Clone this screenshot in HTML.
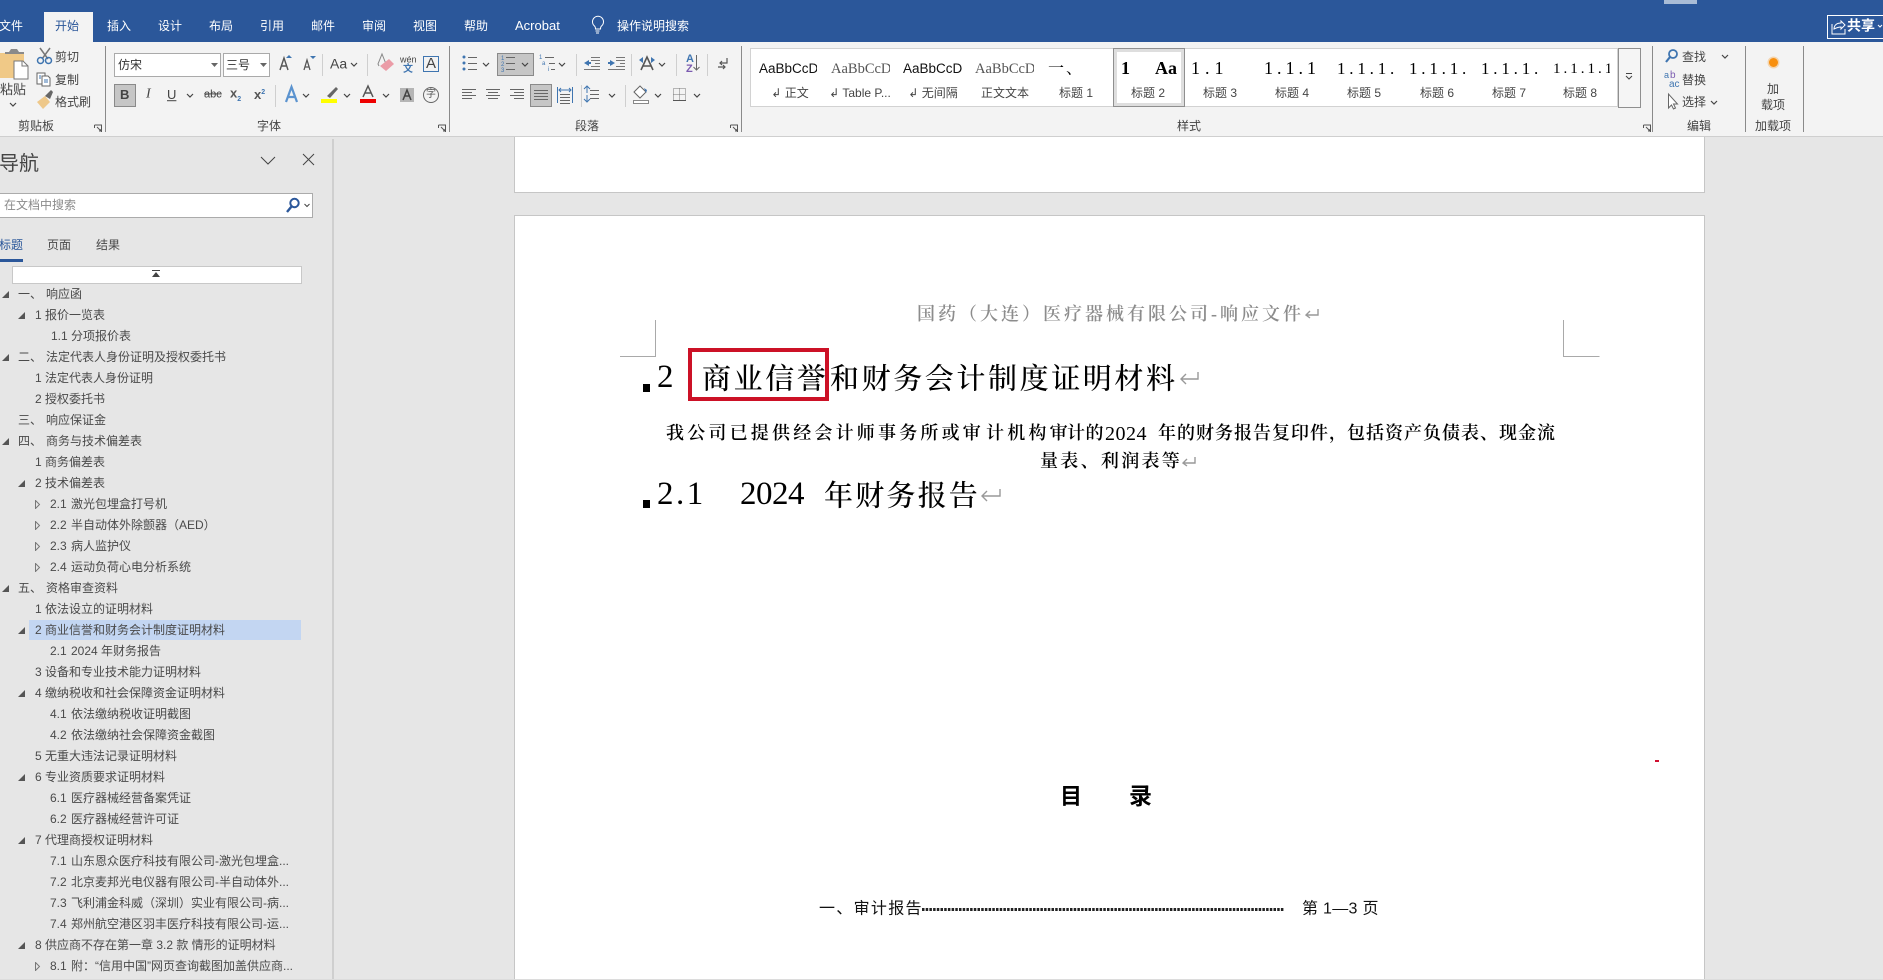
<!DOCTYPE html>
<html lang="zh"><head><meta charset="utf-8"><title>Word</title>
<style>
html,body{margin:0;padding:0;width:1883px;height:980px;overflow:hidden;background:#e6e6e6}
body{position:relative;font-family:"Liberation Sans","Noto Sans CJK SC",sans-serif;font-size:12px;color:#444}
.a{position:absolute}
.t{position:absolute;white-space:nowrap;transform:translateY(-50%);line-height:1.2}
.w{color:#fff}
.r{color:#444}
.c{transform:translate(-50%,-50%);text-align:center}
.s{font-family:"Liberation Serif","Noto Serif CJK SC",serif;color:#000;position:absolute;white-space:nowrap;transform:translateY(-50%);line-height:1.2}
.row{position:absolute;left:0;width:333px;height:21px;line-height:21px;color:#4a4a4a}
.row span{position:absolute;top:0;white-space:nowrap}
.row i{position:absolute;top:7px;width:0;height:0;border-style:solid}
.ex{border-width:0 0 7px 7px;border-color:transparent transparent #555 transparent}
.co{width:4px!important;height:8px!important;top:6px!important;border:0;background:none}
.co svg{position:absolute;left:0;top:0}
.sm{position:absolute;overflow:hidden;white-space:nowrap;height:18px;line-height:18px;top:60px;font-size:13.500px}
</style></head><body>

<!-- title / tab bar -->
<div class="a" style="left:0;top:0;width:1883px;height:42px;background:#2b579a"></div>
<div class="a" style="left:1664px;top:0;width:33px;height:4px;background:#a9bcd6"></div>
<div class="a" style="left:44px;top:12px;width:49px;height:30px;background:#f3f3f3"></div>
<span class="t w" style="left:-1px;top:25.500px">文件</span>
<span class="t" style="left:55px;top:25.500px;color:#2b579a">开始</span>
<span class="t w" style="left:107px;top:25.500px">插入</span>
<span class="t w" style="left:158px;top:25.500px">设计</span>
<span class="t w" style="left:209px;top:25.500px">布局</span>
<span class="t w" style="left:260px;top:25.500px">引用</span>
<span class="t w" style="left:311px;top:25.500px">邮件</span>
<span class="t w" style="left:362px;top:25.500px">审阅</span>
<span class="t w" style="left:413px;top:25.500px">视图</span>
<span class="t w" style="left:464px;top:25.500px">帮助</span>
<span class="t w" style="left:515px;top:25.500px;font-size:13px">Acrobat</span>
<span class="t w" style="left:617px;top:25.500px">操作说明搜索</span>
<div class="a" style="left:1827px;top:15px;width:60px;height:22px;border:1px solid #fff"></div>
<span class="t w" style="left:1847px;top:26px;font-size:14px;font-weight:700">共享</span>

<!-- ribbon -->
<div class="a" style="left:0;top:42px;width:1883px;height:94px;background:#f3f3f3;border-bottom:1px solid #cfcfcf"></div>

<!-- combos, toggles -->
<div class="a" style="left:114px;top:53px;width:107px;height:24px;background:#fff;border:1px solid #aaa;box-sizing:border-box"></div>
<div class="a" style="left:223px;top:53px;width:47px;height:24px;background:#fff;border:1px solid #aaa;box-sizing:border-box"></div>
<div class="a" style="left:114px;top:84px;width:22px;height:23px;background:#c6c6c6;border:1px solid #8a8a8a;box-sizing:border-box"></div>
<div class="a" style="left:497px;top:53px;width:37px;height:23px;background:#c6c6c6;border:1px solid #8a8a8a;box-sizing:border-box"></div>
<div class="a" style="left:530px;top:84px;width:22px;height:23px;background:#c6c6c6;border:1px solid #8a8a8a;box-sizing:border-box"></div>

<!-- styles gallery -->
<div class="a" style="left:750px;top:48px;width:868px;height:59px;background:#fff;border:1px solid #d2d2d2;box-sizing:border-box"></div>
<div class="a" style="left:1113px;top:48px;width:72px;height:59px;background:#fff;border:1px solid #8f8f8f;box-sizing:border-box;box-shadow:inset 0 0 0 3px #dedede"></div>
<div class="a" style="left:1618px;top:48px;width:23px;height:60px;background:#f5f5f5;border:1px solid #8f8f8f;box-sizing:border-box"></div>

<svg class="a" style="left:0;top:0" width="1883" height="137" viewBox="0 0 1883 137" fill="none">
 <!-- lamp -->
 <path d="M594.500 28a5.500 5.500 0 1 1 7 0c-.8.7-1 1.400-1 3h-5c0-1.600-.2-2.300-1-3zM595.500 33h4M596 35h3" stroke="#fff" transform="translate(0,-2)"/>
 <!-- share icon -->
 <path d="M1832 24v10h13v-5M1834 29c0-4 3-6 7-6v-2l4 4-4 4v-2c-3 0-5 1-7 2z" stroke="#fff"/>
 <path d="M1878 25l2 2 2-2" stroke="#fff"/>
 <!-- main seps -->
 <g stroke="#8a8a8a"><path d="M105.500 46v86M449.500 46v86M741.500 46v86M1652.500 46v86M1745.500 46v86M1803.500 46v86"/></g>
 <!-- light seps -->
 <g stroke="#cfcfcf"><path d="M322.500 54v22M367.500 54v22M275.500 85v22M576.500 54v22M631.500 54v22M676.500 54v22M707.500 54v22M581.500 85v22M625.500 85v22"/></g>
 <!-- paste -->
 <path d="M0 53h24v25H0z" fill="#f0c987"/>
 <path d="M5 54h19v-2h-5l-2-3h-6l-2 3H5z" fill="#8a8a8a"/>
 <path d="M14 61h9l5 5v13H14z" fill="#fff" stroke="#777"/>
 <path d="M22 61v5h6" stroke="#777"/>
 <path d="M10 103l3 3 3-3" stroke="#444" stroke-width="1.200"/>
 <!-- scissors -->
 <path d="M40 48l8 11M50 48l-8 11" stroke="#777" stroke-width="1.500"/>
 <circle cx="40.500" cy="60.500" r="3" stroke="#3f75b0" stroke-width="1.500"/>
 <circle cx="48.500" cy="60.500" r="3" stroke="#3f75b0" stroke-width="1.500"/>
 <!-- copy -->
 <path d="M37 73h8v11h-8z" fill="#fff" stroke="#666"/>
 <path d="M42 76h6l2 2v8h-8z" fill="#fff" stroke="#666"/>
 <path d="M44 80h4M44 82h4M39 76h2M39 78h2" stroke="#3f75b0"/>
 <!-- brush -->
 <path d="M37 102l8-6 5 6-7 7z" fill="#eec88a"/>
 <path d="M45 96l6-6 2 2-3 7z" fill="#666"/>
 <!-- launchers -->
 <g stroke="#555"><path d="M94.500 125h7v7M97 127l4 4M99 131h2v-2M94.500 125v3"/><path d="M438.500 125h7v7M441 127l4 4M443 131h2v-2M438.500 125v3"/><path d="M730.500 125h7v7M733 127l4 4M735 131h2v-2M730.500 125v3"/><path d="M1643.500 125h7v7M1646 127l4 4M1648 131h2v-2M1643.500 125v3"/></g>
 <!-- combo arrows -->
 <path d="M211 63h7l-3.500 4z" fill="#666"/><path d="M260 63h7l-3.500 4z" fill="#666"/>
 <!-- A grow/shrink -->
 <path d="M280 70l4-12 4 12M281.500 66h5" stroke="#555" stroke-width="1.400"/><path d="M286 58l3-3 3 3z" fill="#3f75b0"/>
 <path d="M304 70l3-10 3 10M305 67h4" stroke="#555" stroke-width="1.300"/><path d="M310 56h6l-3 3z" fill="#3f75b0"/>
 <path d="M351 63l3 3 3-3" stroke="#444" stroke-width="1.200"/>
 <!-- eraser -->
 <path d="M379 66l-1-2 4-10 4 10" stroke="#888"/><path d="M380 66l9-7 5 5-8 7z" fill="#eb9ca7"/>
 <!-- A box -->
 <path d="M423.500 56.500h15v15h-15z" stroke="#3f75b0"/>
 <!-- row 2 chevrons -->
 <path d="M187 94l3 3 3-3M303 94l3 3 3-3M344 94l3 3 3-3M383 94l3 3 3-3" stroke="#444" stroke-width="1.200"/>
 <!-- A outline blue -->
 <path d="M286 102l5.500-15 5.500 15M288 97h7" stroke="#5b93cf" stroke-width="2.200"/>
 <!-- highlighter -->
 <path d="M327 96l9-9 2 2-8 9z" fill="#666"/>
 <rect x="321" y="99" width="16" height="4" fill="#ff0"/>
 <rect x="360" y="99" width="16" height="4" fill="#e00"/>
 <path d="M363 97l5-11 5 11M365 93h6" stroke="#555" stroke-width="1.500"/>
 <rect x="400" y="88" width="14" height="14" fill="#b5b5b5"/>
 <path d="M403 100l4-10 4 10M404.500 96h5" stroke="#444" stroke-width="1.500"/>
 <circle cx="431" cy="95" r="7.500" stroke="#666"/>
 <!-- para row 1 -->
 <g fill="#3f75b0"><circle cx="464" cy="57" r="1.500"/><circle cx="464" cy="63" r="1.500"/><circle cx="464" cy="69" r="1.500"/></g>
 <g stroke="#666"><path d="M468 57.500h9M468 63.500h9M468 69.500h9"/><path d="M506 57.500h9M506 63.500h9M506 69.500h9"/><path d="M545 57.500h9M549 63.500h6M551 69.500h4"/></g>
 <g fill="#3f75b0" font-family="Liberation Sans" font-size="6"><text x="501" y="60">1</text><text x="501" y="66">2</text><text x="501" y="72">3</text><text x="539" y="59">1</text><text x="542" y="65">a</text><text x="548" y="71">i</text></g>
 <g stroke="#444" stroke-width="1.200"><path d="M483 63l3 3 3-3M522 63l3 3 3-3M559 63l3 3 3-3M659 63l3 3 3-3M609 94l3 3 3-3M655 94l3 3 3-3M694 94l3 3 3-3"/></g>
 <!-- indent -->
 <g stroke="#777"><path d="M591 57.500h9M591 60.500h9M595 63.500h5M591 66.500h9M584 69.500h16"/><path d="M616 57.500h9M616 60.500h9M620 63.500h5M616 66.500h9M608 69.500h17"/></g>
 <path d="M584 63l5-3v2h2v2h-2v2z" fill="#3f75b0"/><path d="M615 63l-5-3v2h-2v2h2v2z" fill="#3f75b0"/>
 <!-- text direction -->
 <path d="M641 70l6-13 6 13M643 66h8" stroke="#555" stroke-width="1.600"/>
 <path d="M639 60l4-3v6zM655 60l-4-3v6z" fill="#3f75b0"/>
 <!-- sort -->
 <text x="686" y="62" font-family="Liberation Sans" font-size="11" font-weight="700" fill="#3f75b0">A</text>
 <text x="686" y="72" font-family="Liberation Sans" font-size="11" font-weight="700" fill="#7b5bb0">Z</text>
 <path d="M696.500 55v15M693.500 67l3 3 3-3" stroke="#666"/>
 <!-- pilcrow -->
 <path d="M727 58v5h-7M722 61l-2 2 2 2M718 67h7M723 65l2 2-2 2" stroke="#555" stroke-width="1.200"/>
 <!-- para row 2 -->
 <g stroke="#666">
  <path d="M462 89.500h14M462 92.500h10M462 95.500h14M462 98.500h10"/>
  <path d="M486 89.500h14M488 92.500h10M486 95.500h14M488 98.500h10"/>
  <path d="M510 89.500h14M514 92.500h10M510 95.500h14M514 98.500h10"/>
  <path d="M534 90.500h14M534 93.500h14M534 96.500h14M534 99.500h14"/>
  <path d="M560 94.500h10M560 97.500h10M560 100.500h10M560 103.500h10"/>
  <path d="M590 90.500h9M590 94.500h9M590 98.500h9"/>
 </g>
 <path d="M557.500 87v16M572.500 87v16M559 90h12M561 88l-2 2 2 2M569 88l2 2-2 2" stroke="#3f75b0"/>
 <path d="M591 89l-3-3-3 3M588 86v7M585 99l3 3 3-3M588 102v-7" stroke="#3f75b0" transform="translate(-1,0)"/>
 <!-- shading -->
 <path d="M634 92l6-6 6 6-6 6z" fill="#fff" stroke="#666"/><path d="M644 88l3 2-1 3z" fill="#3f75b0"/>
 <path d="M633.500 100.500h15v3h-15z" fill="#fff" stroke="#888"/>
 <!-- borders -->
 <path d="M673.500 88.500h12v12h-12zM679.500 88.500v12M673.500 94.500h12" stroke="#777" stroke-dasharray="1 1"/>
 <path d="M673 100.500h13" stroke="#555"/>
 <!-- gallery scroll -->
 <path d="M1626 73.500h6M1626 76l3 3 3-3" stroke="#444"/>
 <!-- editing -->
 <circle cx="1673" cy="54" r="4" stroke="#3f75b0" stroke-width="1.800"/><path d="M1670 57l-4 5" stroke="#3f75b0" stroke-width="2.200"/>
 <path d="M1722 55l3 3 3-3M1711 101l3 3 3-3" stroke="#444" stroke-width="1.200"/>
 <text x="1664" y="78" font-family="Liberation Sans" font-size="9" fill="#3f75b0">a</text><text x="1670" y="78" font-family="Liberation Sans" font-size="10" fill="#7b5bb0">b</text>
 <text x="1669" y="87" font-family="Liberation Sans" font-size="10" fill="#3f75b0">ac</text>
 <path d="M1668.500 94v14l3-3 2 4 2-1-2-4h4z" fill="#fff" stroke="#666"/>
 <circle cx="1773.500" cy="62.500" r="4.500" fill="#f8900e"/>
 <circle cx="1773.500" cy="62.500" r="6" fill="#f8900e" opacity=".3"/>
</svg>

<!-- clipboard labels -->
<span class="t r" style="left:0;top:90px;font-size:13px">粘贴</span>
<span class="t r" style="left:55px;top:57px">剪切</span>
<span class="t r" style="left:55px;top:80px">复制</span>
<span class="t r" style="left:55px;top:102px">格式刷</span>
<span class="t r" style="left:18px;top:126px">剪贴板</span>
<!-- font -->
<span class="t" style="left:118px;top:65px;color:#333">仿宋</span>
<span class="t" style="left:226px;top:65px;color:#333">三号</span>
<span class="t r" style="left:330px;top:64px;font-size:14px">Aa</span>
<span class="t" style="left:400px;top:60px;font-size:9px;color:#444">wén</span>
<span class="t" style="left:403px;top:70px;font-size:10px;color:#3f75b0;font-weight:700">文</span>
<span class="t r" style="left:426px;top:64px;font-size:15px">A</span>
<span class="t" style="left:120px;top:95px;font-size:13px;font-weight:700;color:#444">B</span>
<span class="t" style="left:146px;top:95px;font-size:14px;font-style:italic;font-family:'Liberation Serif',serif;color:#444">I</span>
<span class="t" style="left:167px;top:95px;font-size:13px;color:#444;text-decoration:underline">U</span>
<span class="t" style="left:204px;top:95px;font-size:11px;color:#444;text-decoration:line-through">abc</span>
<span class="t" style="left:230px;top:95px;font-size:13px;font-weight:700;color:#555">x<sub style="font-size:7px;color:#3f75b0">2</sub></span>
<span class="t" style="left:254px;top:95px;font-size:13px;font-weight:700;color:#555">x<sup style="font-size:7px;color:#3f75b0">2</sup></span>
<span class="t" style="left:426px;top:95px;font-size:10px;color:#555">字</span>
<span class="t r" style="left:257px;top:126px">字体</span>
<span class="t r" style="left:575px;top:126px">段落</span>
<span class="t r" style="left:1177px;top:126px">样式</span>
<span class="t r" style="left:1687px;top:126px">编辑</span>
<span class="t r" style="left:1755px;top:126px">加载项</span>
<span class="t r" style="left:1682px;top:57px">查找</span>
<span class="t r" style="left:1682px;top:80px">替换</span>
<span class="t r" style="left:1682px;top:102px">选择</span>
<span class="t r c" style="left:1773px;top:89px">加</span>
<span class="t r c" style="left:1773px;top:105px">载项</span>

<!-- gallery samples -->
<div class="sm" style="left:759px;width:58px;font-family:'Liberation Sans',sans-serif;color:#111">AaBbCcDd</div>
<div class="sm" style="left:831px;width:59px;font-family:'Liberation Serif',serif;color:#555;font-size:14.500px">AaBbCcDd</div>
<div class="sm" style="left:903px;width:59px;font-family:'Liberation Sans',sans-serif;color:#111">AaBbCcDd</div>
<div class="sm" style="left:975px;width:59px;font-family:'Liberation Serif',serif;color:#555;font-size:14.500px">AaBbCcDd</div>
<span class="s" style="left:1048px;top:69px;font-size:16px;letter-spacing:2px">一、</span>
<span class="s" style="left:1121px;top:69px;font-size:18px;font-weight:700">1</span>
<span class="s" style="left:1155px;top:69px;font-size:18px;font-weight:700">Aa</span>
<span class="s" style="left:1191px;top:69px;font-size:18px;letter-spacing:5px">1.1</span>
<span class="s" style="left:1264px;top:69px;font-size:18px;letter-spacing:4px">1.1.1</span>
<span class="s" style="left:1337px;top:69px;font-size:17px;letter-spacing:3.800px">1.1.1.</span>
<span class="s" style="left:1409px;top:69px;font-size:17px;letter-spacing:3.800px">1.1.1.</span>
<span class="s" style="left:1481px;top:69px;font-size:17px;letter-spacing:3.800px">1.1.1.</span>
<div class="s" style="left:1553px;top:69px;font-size:15px;letter-spacing:3px;width:57px;overflow:hidden">1.1.1.1.1</div>
<span class="t r c" style="left:790px;top:93px;font-size:12px">↲ 正文</span>
<span class="t r c" style="left:860px;top:93px;font-size:12px">↲ Table P...</span>
<span class="t r c" style="left:933px;top:93px;font-size:12px">↲ 无间隔</span>
<span class="t r c" style="left:1005px;top:93px;font-size:12px">正文文本</span>
<span class="t r c" style="left:1076px;top:93px;font-size:12px">标题 1</span>
<span class="t r c" style="left:1148px;top:93px;font-size:12px">标题 2</span>
<span class="t r c" style="left:1220px;top:93px;font-size:12px">标题 3</span>
<span class="t r c" style="left:1292px;top:93px;font-size:12px">标题 4</span>
<span class="t r c" style="left:1364px;top:93px;font-size:12px">标题 5</span>
<span class="t r c" style="left:1437px;top:93px;font-size:12px">标题 6</span>
<span class="t r c" style="left:1509px;top:93px;font-size:12px">标题 7</span>
<span class="t r c" style="left:1580px;top:93px;font-size:12px">标题 8</span>

<!-- nav pane -->
<div class="a" style="left:332px;top:139px;width:2px;height:841px;background:#cfcfcf"></div>
<span class="t" style="left:-1px;top:164px;font-size:20px;color:#444">导航</span>
<svg class="a" style="left:258px;top:150px" width="60" height="20" fill="none" stroke="#444"><path d="M3 7l7 7 7-7M45 4l11 11M56 4L45 15"/></svg>
<div class="a" style="left:-2px;top:193px;width:315px;height:25px;background:#fff;border:1px solid #ababab;box-sizing:border-box"></div>
<span class="t" style="left:4px;top:205px;color:#8a8a8a">在文档中搜索</span>
<svg class="a" style="left:284px;top:196px" width="30" height="20" fill="none"><circle cx="10.500" cy="7" r="4.200" stroke="#2b579a" stroke-width="2"/><path d="M7.500 10.500L3 16" stroke="#2b579a" stroke-width="2.400"/><path d="M20.500 8l2.500 2.500 2.500-2.500" stroke="#444"/></svg>
<span class="t" style="left:-1px;top:245px;color:#2b579a">标题</span>
<div class="a" style="left:0;top:259px;width:23px;height:3px;background:#2b579a"></div>
<span class="t" style="left:47px;top:245px;color:#4a4a4a">页面</span>
<span class="t" style="left:96px;top:245px;color:#4a4a4a">结果</span>
<div class="a" style="left:12px;top:266px;width:290px;height:18px;background:#fff;border:1px solid #c8c8c8;box-sizing:border-box"></div>
<svg class="a" style="left:152px;top:270px" width="9" height="9"><path d="M0 0h8v1H0zM4 2l4 5H0z" fill="#444"/></svg>

<div class="a" style="left:29px;top:620px;width:272px;height:20px;background:#c3d6f2"></div>

<div class="a" style="left:0;top:1px;width:333px;height:980px">
<div class="row" style="top:283px"><i class="ex" style="left:2px"></i><span style="left:18px">一、</span><span style="left:46px">响应函</span></div>
<div class="row" style="top:304px"><i class="ex" style="left:18px"></i><span style="left:35px">1</span><span style="left:45px">报价一览表</span></div>
<div class="row" style="top:325px"><span style="left:51px">1.1</span><span style="left:71px">分项报价表</span></div>
<div class="row" style="top:346px"><i class="ex" style="left:2px"></i><span style="left:18px">二、</span><span style="left:46px">法定代表人身份证明及授权委托书</span></div>
<div class="row" style="top:367px"><span style="left:35px">1</span><span style="left:45px">法定代表人身份证明</span></div>
<div class="row" style="top:388px"><span style="left:35px">2</span><span style="left:45px">授权委托书</span></div>
<div class="row" style="top:409px"><span style="left:18px">三、</span><span style="left:46px">响应保证金</span></div>
<div class="row" style="top:430px"><i class="ex" style="left:2px"></i><span style="left:18px">四、</span><span style="left:46px">商务与技术偏差表</span></div>
<div class="row" style="top:451px"><span style="left:35px">1</span><span style="left:45px">商务偏差表</span></div>
<div class="row" style="top:472px"><i class="ex" style="left:18px"></i><span style="left:35px">2</span><span style="left:45px">技术偏差表</span></div>
<div class="row" style="top:493px"><i class="co" style="left:35px"><svg width="6" height="9" fill="none" stroke="#777"><path d="M.5.500l4 4-4 4z"/></svg></i><span style="left:50px">2.1</span><span style="left:71px">激光包埋盒打号机</span></div>
<div class="row" style="top:514px"><i class="co" style="left:35px"><svg width="6" height="9" fill="none" stroke="#777"><path d="M.5.500l4 4-4 4z"/></svg></i><span style="left:50px">2.2</span><span style="left:71px">半自动体外除颤器（AED）</span></div>
<div class="row" style="top:535px"><i class="co" style="left:35px"><svg width="6" height="9" fill="none" stroke="#777"><path d="M.5.500l4 4-4 4z"/></svg></i><span style="left:50px">2.3</span><span style="left:71px">病人监护仪</span></div>
<div class="row" style="top:556px"><i class="co" style="left:35px"><svg width="6" height="9" fill="none" stroke="#777"><path d="M.5.500l4 4-4 4z"/></svg></i><span style="left:50px">2.4</span><span style="left:71px">运动负荷心电分析系统</span></div>
<div class="row" style="top:577px"><i class="ex" style="left:2px"></i><span style="left:18px">五、</span><span style="left:46px">资格审查资料</span></div>
<div class="row" style="top:598px"><span style="left:35px">1</span><span style="left:45px">依法设立的证明材料</span></div>
<div class="row" style="top:619px"><i class="ex" style="left:18px"></i><span style="left:35px">2</span><span style="left:45px">商业信誉和财务会计制度证明材料</span></div>
<div class="row" style="top:640px"><span style="left:50px">2.1</span><span style="left:71px">2024 年财务报告</span></div>
<div class="row" style="top:661px"><span style="left:35px">3</span><span style="left:45px">设备和专业技术能力证明材料</span></div>
<div class="row" style="top:682px"><i class="ex" style="left:18px"></i><span style="left:35px">4</span><span style="left:45px">缴纳税收和社会保障资金证明材料</span></div>
<div class="row" style="top:703px"><span style="left:50px">4.1</span><span style="left:71px">依法缴纳税收证明截图</span></div>
<div class="row" style="top:724px"><span style="left:50px">4.2</span><span style="left:71px">依法缴纳社会保障资金截图</span></div>
<div class="row" style="top:745px"><span style="left:35px">5</span><span style="left:45px">无重大违法记录证明材料</span></div>
<div class="row" style="top:766px"><i class="ex" style="left:18px"></i><span style="left:35px">6</span><span style="left:45px">专业资质要求证明材料</span></div>
<div class="row" style="top:787px"><span style="left:50px">6.1</span><span style="left:71px">医疗器械经营备案凭证</span></div>
<div class="row" style="top:808px"><span style="left:50px">6.2</span><span style="left:71px">医疗器械经营许可证</span></div>
<div class="row" style="top:829px"><i class="ex" style="left:18px"></i><span style="left:35px">7</span><span style="left:45px">代理商授权证明材料</span></div>
<div class="row" style="top:850px"><span style="left:50px">7.1</span><span style="left:71px">山东恩众医疗科技有限公司-激光包埋盒...</span></div>
<div class="row" style="top:871px"><span style="left:50px">7.2</span><span style="left:71px">北京麦邦光电仪器有限公司-半自动体外...</span></div>
<div class="row" style="top:892px"><span style="left:50px">7.3</span><span style="left:71px">飞利浦金科威（深圳）实业有限公司-病...</span></div>
<div class="row" style="top:913px"><span style="left:50px">7.4</span><span style="left:71px">郑州航空港区羽丰医疗科技有限公司-运...</span></div>
<div class="row" style="top:934px"><i class="ex" style="left:18px"></i><span style="left:35px">8</span><span style="left:45px">供应商不存在第一章 3.2 款 情形的证明材料</span></div>
<div class="row" style="top:955px"><i class="co" style="left:35px"><svg width="6" height="9" fill="none" stroke="#777"><path d="M.5.500l4 4-4 4z"/></svg></i><span style="left:50px">8.1</span><span style="left:71px">附：“信用中国”网页查询截图加盖供应商...</span></div>
</div>

<!-- pages -->
<div class="a" style="left:514px;top:137px;width:1191px;height:56px;background:#fff;border:1px solid #c6c6c6;border-top:0;box-sizing:border-box"></div>
<div class="a" style="left:514px;top:215px;width:1191px;height:764px;background:#fff;border:1px solid #c6c6c6;border-bottom:0;box-sizing:border-box"></div>
<div class="a" style="left:0;top:979px;width:1883px;height:1px;background:#dcdcdc"></div>

<span class="s" style="left:917px;top:315px;font-size:18px;letter-spacing:3px;color:#8c8c8c;font-weight:600">国药（大连）医疗器械有限公司-响应文件</span>

<svg class="a" style="left:0;top:0;pointer-events:none" width="1883" height="980" fill="none">
 <path d="M655.500 320v36.500H620M1563.500 320v36.500h36" stroke="#a9a9a9"/>
 <rect x="643" y="384" width="7" height="8" fill="#000"/>
 <rect x="643" y="500" width="7" height="8" fill="#000"/>
 <g stroke="#999" stroke-width="1.400">
  <path d="M1198 372v7h-17M1186 374l-5 5 5 5"/>
  <path d="M1000 489v7h-18M987 491l-5 5 5 5"/>
  <path d="M1318 309v6h-12M1310 311l-4 4 4 3"/>
  <path d="M1195 457v6h-12M1187 459l-4 4 4 3"/>
 </g>
 <rect x="690" y="350" width="137" height="49" stroke="#cc1126" stroke-width="4"/>
 <rect x="1655" y="760" width="4" height="2" fill="#d01030"/>
</svg>

<!-- heading 2 -->
<span class="s" style="left:657px;top:378px;font-size:33px">2</span>
<span class="s" style="left:702px;top:380px;font-size:29px;letter-spacing:2.600px;font-weight:500">商业信誉</span>
<span class="s" style="left:830px;top:380px;font-size:29px;letter-spacing:2.600px;font-weight:500">和财务会计制度证明材料</span>
<!-- paragraph -->
<span class="s" style="left:666px;top:434px;font-size:18px;letter-spacing:3.200px;font-weight:600">我公司已提供经会计师事务所或审</span>
<span class="s" style="left:986px;top:434px;font-size:18px;letter-spacing:3.200px;font-weight:600">计机构审</span>
<span class="s" style="left:1067px;top:434px;font-size:18px;letter-spacing:.5px;font-weight:600">计的</span>
<span class="s" style="left:1105px;top:434px;font-size:20px;letter-spacing:.5px;font-weight:400">2024</span>
<span class="s" style="left:1158px;top:434px;font-size:18px;letter-spacing:1px;font-weight:600">年的财务报告复印件，</span>
<span class="s" style="left:1347px;top:434px;font-size:18px;letter-spacing:1px;font-weight:600">包括资产负债表、现金流</span>
<span class="s" style="left:1040px;top:461.500px;font-size:18px;letter-spacing:2.300px;font-weight:600">量表、利润表等</span>
<!-- heading 3 -->
<span class="s" style="left:657px;top:495px;font-size:33px;letter-spacing:2.500px">2.1</span>
<span class="s" style="left:740px;top:495px;font-size:33px;letter-spacing:-.5px">2024</span>
<span class="s" style="left:824px;top:497px;font-size:29px;letter-spacing:2.200px;font-weight:500">年财务报告</span>
<!-- toc -->
<span class="t" style="left:1060px;top:797px;font-size:22px;font-weight:700;color:#000">目</span>
<span class="t" style="left:1129px;top:797px;font-size:23px;font-weight:700;color:#000">录</span>
<span class="t" style="left:819px;top:909px;font-size:16px;letter-spacing:1.300px;color:#111">一、审计报告</span>
<svg class="a" style="left:922px;top:906px" width="364" height="6"><path d="M0 3.500h362" stroke="#222" stroke-width="3" stroke-dasharray="2.500 1.200"/></svg>
<span class="t" style="left:1302px;top:909px;font-size:16px;letter-spacing:.3px;color:#111">第 1—3 页</span>
</body></html>
